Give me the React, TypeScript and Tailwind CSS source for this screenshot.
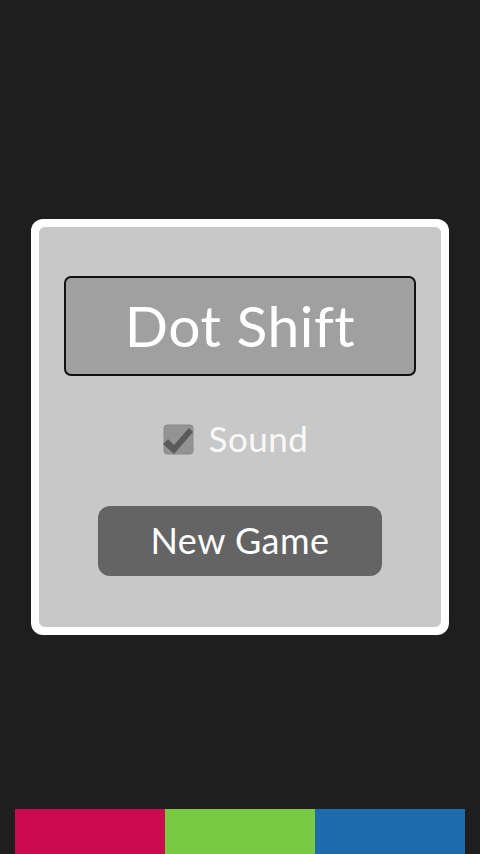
import { useState } from 'react';

export default function App() {
  const [sound, setSound] = useState(true);

  return (
    <div
      className="h-[854px] w-[480px] bg-[#1e1e1e] flex flex-col overflow-hidden"
      style={{ fontFamily: 'Lato, "Open Sans", sans-serif' }}
    >
      <div className="pt-[219px] px-[31px]">
        <div className="rounded-[12px] bg-white p-[8px]">
          <div className="rounded-[6px] bg-[#c8c8c8] px-[25px] pt-[49px] pb-[51px] flex flex-col items-center">
            <div className="w-full h-[100px] rounded-[7px] border-2 border-[#111] bg-[#a0a0a0] flex items-center justify-center">
              <span className="text-white text-[57px] leading-none pb-[2px] tracking-[0.5px]">Dot Shift</span>
            </div>

            <button
              type="button"
              onClick={() => setSound((v) => !v)}
              className="mt-[47px] mr-[10px] flex items-center gap-[15px] h-[32px]"
            >
              <svg width="32" height="32" viewBox="0 0 32 32" className="shrink-0">
                <rect x="2" y="2" width="29" height="29" rx="3" fill="#939393" stroke="#8a8a8a" strokeWidth="1" />
                {sound && (
                  <path
                    d="M1 21 L6 16 L12 22 L27 5 L31 9 L12 31 Z"
                    fill="#5a5a5a"
                  />
                )}
              </svg>
              <span className="text-[#f8f8f8] text-[35px] leading-none pb-[2px] tracking-[0.5px]">Sound</span>
            </button>

            <button
              type="button"
              className="mt-[51px] w-[284px] h-[70px] rounded-[12px] bg-[#646464] flex items-center justify-center"
            >
              <span className="text-white text-[36px] leading-none pb-[2px] tracking-[0.5px]">New Game</span>
            </button>
          </div>
        </div>
      </div>

      <div className="mt-auto px-[15px] flex h-[45px]">
        <div className="flex-1 bg-[#cc0a50]" />
        <div className="flex-1 bg-[#7ac943]" />
        <div className="flex-1 bg-[#1f6aaa]" />
      </div>
    </div>
  );
}
